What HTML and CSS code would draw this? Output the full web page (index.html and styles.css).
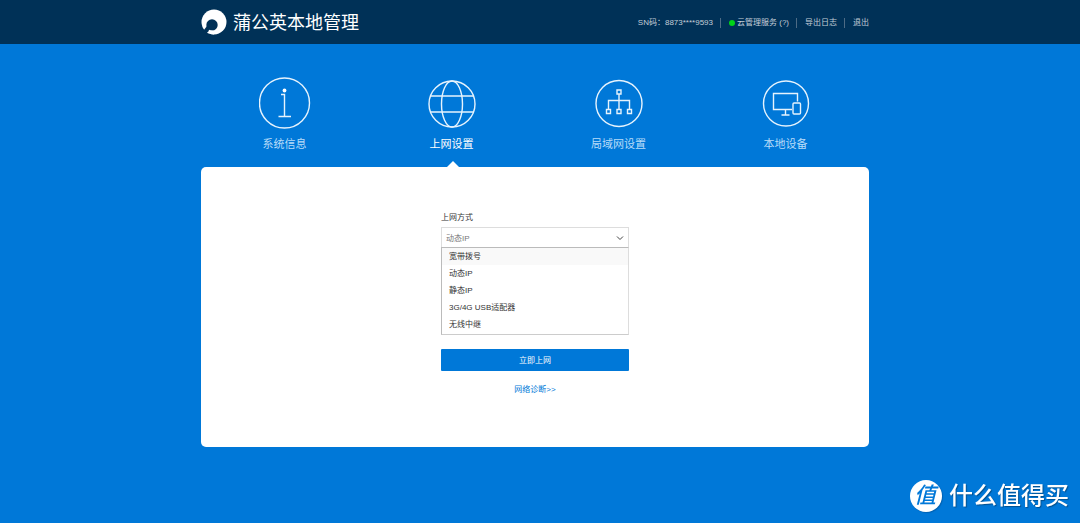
FILE: index.html
```
<!DOCTYPE html>
<html lang="zh-CN">
<head>
<meta charset="utf-8">
<meta name="viewport" content="width=device-width, initial-scale=1">
<title>蒲公英本地管理</title>
<link rel="stylesheet" href="styles.css">
</head>
<body>
<header class="header">
  <div class="container header-inner">
    <div class="brand">
      <svg class="brand-logo" viewBox="0 0 26 26" aria-hidden="true">
        <circle class="solid" cx="13" cy="13" r="12.500"/>
        <circle class="cutout" cx="11" cy="16" r="5.700"/>
        <path class="cutout" d="M6 17L2.500 21.500L4.500 25L9 26L9.500 20Z"/>
        <path class="solid" d="M8 20.800C9.500 21.300 10.500 21.700 12.500 21.400L13 25.500C10.500 25.500 8 25 6 23.800C7.200 23 7.900 22 8 20.800Z"/>
      </svg>
      <h1 class="brand-name">蒲公英本地管理</h1>
    </div>
    <ul class="tools">
      <li class="tool">SN码：<span class="serial">8873****9593</span></li>
      <li class="tool"><span class="status-dot"></span><a href="#cloud">云管理服务 (?)</a></li>
      <li class="tool"><a href="#log">导出日志</a></li>
      <li class="tool"><a href="#logout">退出</a></li>
    </ul>
  </div>
</header>

<main class="container">
  <nav class="nav">
    <a class="nav-item" href="#system">
      <svg class="nav-icon" viewBox="0 0 52 52" aria-hidden="true">
        <circle cx="25.500" cy="26" r="25"/>
        <path d="M22 17.500H25.500V39.500M19.500 39.500H32"/>
        <circle class="solid" cx="25.500" cy="13.500" r="1.900"/>
      </svg>
      <span>系统信息</span>
    </a>
    <a class="nav-item active" href="#wan" aria-current="page">
      <svg class="nav-icon" viewBox="0 0 52 52" aria-hidden="true">
        <circle cx="26" cy="27" r="23"/>
        <ellipse cx="26" cy="27" rx="10.500" ry="23"/>
        <path d="M4.500 19H47.500M4.500 35H47.500"/>
      </svg>
      <span>上网设置</span>
    </a>
    <a class="nav-item" href="#lan">
      <svg class="nav-icon" viewBox="0 0 52 52" aria-hidden="true">
        <circle cx="26" cy="26.500" r="23"/>
        <path d="M24 13h4v4h-4zM13.500 32.500h4v4h-4zM24 32.500h4v4h-4zM34.500 32.500h4v4h-4zM26 17V32.500M15.500 32.500V23.500H36.500V32.500"/>
      </svg>
      <span>局域网设置</span>
    </a>
    <a class="nav-item" href="#devices">
      <svg class="nav-icon" viewBox="0 0 52 52" aria-hidden="true">
        <circle cx="26" cy="26.500" r="22.500"/>
        <path d="M32 32.500H13.500V16.500H37.500V24.500M25.500 32.500V38M21.500 38H29.500"/>
        <rect x="33" y="26" width="7.500" height="11" rx="1"/>
      </svg>
      <span>本地设备</span>
    </a>
  </nav>

  <section class="card">
    <form class="form">
      <label class="label" for="mode">上网方式</label>
      <div class="dropdown">
        <select class="select" id="mode">
          <option>动态IP</option>
        </select>
        <svg class="chevron" viewBox="0 0 8 6" aria-hidden="true"><path d="M1 1.500L4 4.500L7 1.500"/></svg>
        <ul class="menu" role="listbox" aria-label="上网方式">
          <li class="option hover" role="option">宽带拨号</li>
          <li class="option" role="option" aria-selected="true">动态IP</li>
          <li class="option" role="option">静态IP</li>
          <li class="option" role="option">3G/4G USB适配器</li>
          <li class="option" role="option">无线中继</li>
        </ul>
      </div>
      <button class="submit" type="button">立即上网</button>
      <a class="diagnose" href="#diagnose">网络诊断&gt;&gt;</a>
    </form>
  </section>
</main>

<div class="watermark">
  <span class="watermark-badge">值</span>
  <span>什么值得买</span>
</div>
</body>
</html>
```
FILE: styles.css
```
* {
  box-sizing: border-box;
}

body {
  margin: 0;
  min-height: 100vh;
  background: #0078d8;
  color: #333;
  font: 8px/12px "Liberation Sans", "Noto Sans CJK SC", sans-serif;
}

a {
  color: inherit;
  text-decoration: none;
}

ul {
  margin: 0;
  padding: 0;
  list-style: none;
}

.header {
  background: #003157;
}

.container {
  width: calc(100% - 32px);
  max-width: 678px;
  margin: 0 auto;
  padding-right: 10px;
}

.header-inner {
  display: flex;
  align-items: center;
  justify-content: space-between;
  height: 44px;
}

.brand {
  display: flex;
  align-items: center;
  gap: 6px;
}

.brand-logo {
  width: 26px;
  height: 26px;
}

.solid {
  fill: #fff;
  stroke: none;
}

.cutout {
  fill: #003157;
}

.brand-name {
  margin: 0;
  padding-top: 2px;
  color: #fff;
  font-size: 18px;
  line-height: 26px;
  font-weight: 400;
}

.tools {
  display: flex;
  align-items: center;
  padding-top: 1px;
  color: #c3ced8;
}

.tool {
  display: flex;
  align-items: center;
  height: 10px;
}

.tool + .tool {
  margin-left: 7px;
  padding-left: 8px;
  border-left: 1px solid #4d6b85;
}

.status-dot {
  width: 6px;
  height: 6px;
  margin-right: 2px;
  border-radius: 50%;
  background: #00d318;
}

.nav {
  display: grid;
  grid-template-columns: repeat(4, 1fr);
  padding-top: 33px;
}

.nav-item {
  display: flex;
  flex-direction: column;
  align-items: center;
  gap: 7px;
  height: 90px;
  color: #b8dcf8;
  font-size: 11px;
  line-height: 16px;
}

.nav-icon {
  width: 52px;
  height: 52px;
  fill: none;
  stroke: #e6f3fd;
  stroke-width: 1.4;
}

.nav-item .solid {
  fill: #fff;
  stroke: none;
}

.active {
  position: relative;
  color: #fff;
}

.active::after {
  content: "";
  position: absolute;
  bottom: 0;
  left: 50%;
  margin-left: -5px;
  border: 6px solid transparent;
  border-top: 0;
  border-bottom-color: #fff;
}

.card {
  min-height: 280px;
  padding: 45px 16px;
  border-radius: 5px;
  background: #fff;
}

.form {
  display: flex;
  flex-direction: column;
  max-width: 188px;
  margin: 0 auto;
}

.label {
  margin-bottom: 3px;
}

.dropdown {
  position: relative;
  margin-bottom: 100px;
}

.select {
  display: block;
  width: 100%;
  height: 22px;
  padding: 1px 4px 0;
  border: 1px solid #ddd;
  border-radius: 0;
  background: #fff;
  color: #777;
  font: inherit;
  appearance: none;
}

.chevron {
  position: absolute;
  top: 8px;
  right: 5px;
  width: 8px;
  height: 6px;
  fill: none;
  stroke: #444;
  pointer-events: none;
}

.menu {
  position: absolute;
  top: 20px;
  left: 0;
  width: 100%;
  padding-bottom: 1px;
  border: 1px solid #bbb;
  border-right-color: #ddd;
  border-bottom-color: #ccc;
  background: #fff;
}

.option {
  padding: 1px 7px 0;
  line-height: 16px;
}

.hover {
  background: #f9f9f9;
}

.submit {
  height: 22px;
  padding: 1px 0 0;
  border: 0;
  border-radius: 1px;
  background: #0078d8;
  color: #fff;
  font: inherit;
}

.diagnose {
  align-self: center;
  margin-top: 13px;
  color: #0078d8;
}

.watermark {
  position: fixed;
  right: 11px;
  bottom: 11px;
  display: flex;
  align-items: center;
  gap: 7px;
  color: #fff;
  font-size: 24px;
  line-height: 32px;
  font-weight: 500;
  text-shadow: 1px 1px 1px #00508f;
}

.watermark-badge {
  width: 32px;
  height: 32px;
  border-radius: 50%;
  background: #fff;
  box-shadow: 1px 1px 1px #0062b3;
  color: #0078d8;
  font-size: 22px;
  font-style: italic;
  line-height: 31px;
  text-align: center;
  text-indent: -2px;
  text-shadow: none;
}
```
